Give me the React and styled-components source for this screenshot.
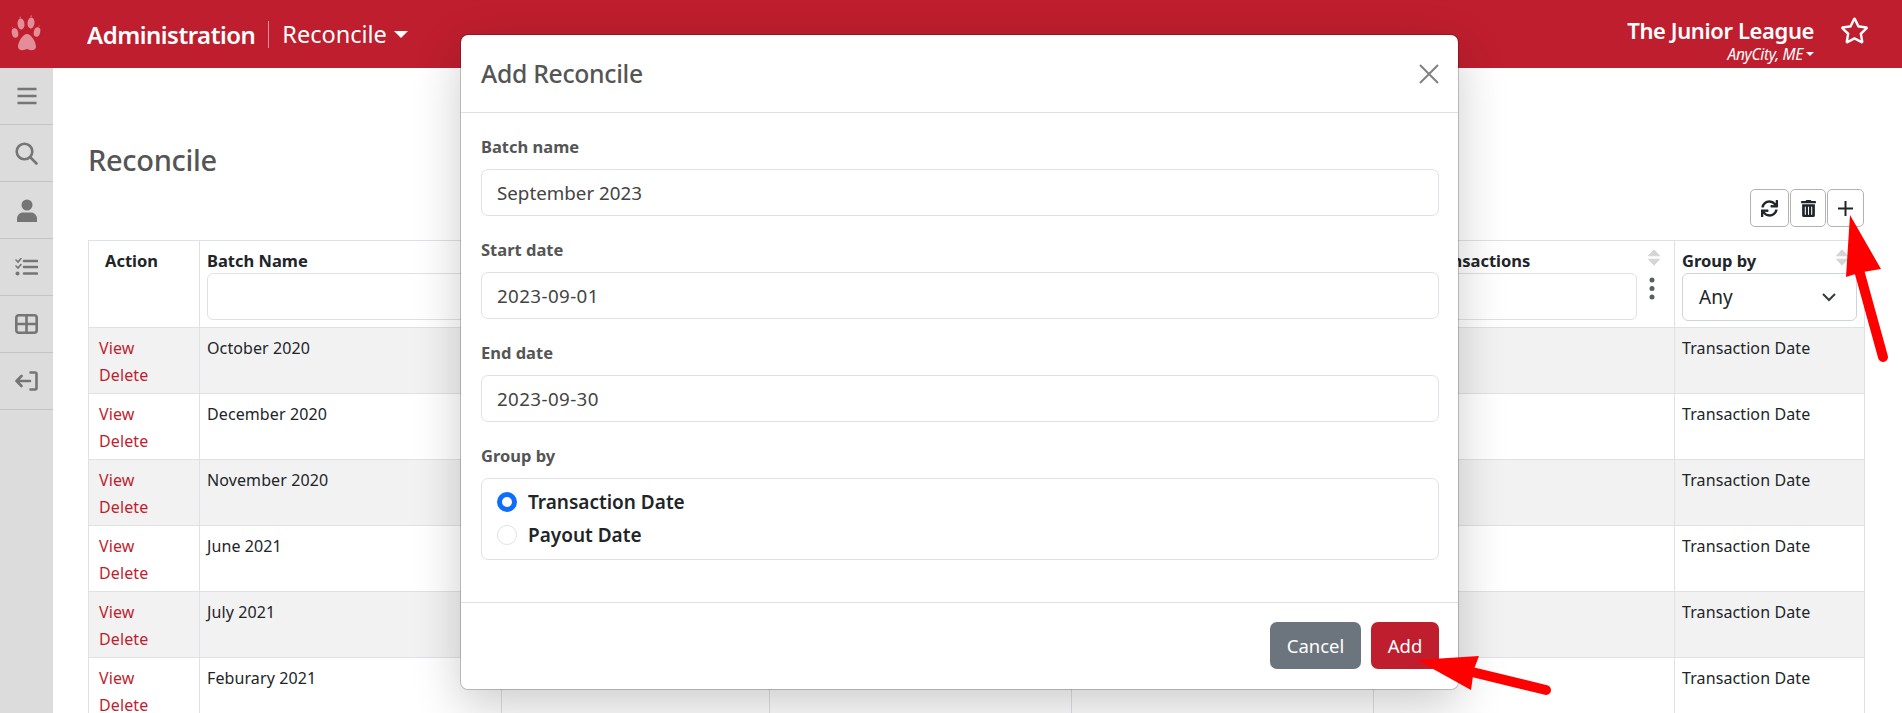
import React from "react";
import styled, { createGlobalStyle } from "styled-components";
import { FaSync, FaRegStar, FaTrashAlt } from "react-icons/fa";

const font = `"Noto Sans", "Open Sans", sans-serif`;

const Global = createGlobalStyle`
  html, body { margin: 0; padding: 0; height: 713px; overflow: hidden; background: #fff; }
  body { font-family: ${font}; font-size: 15px; color: #212529; }
  * { box-sizing: border-box; }
`;

const Page = styled.div`position: relative; width: 1902px; height: 713px; overflow: hidden;`;
const TopBar = styled.header`
  height: 68px; background: #bf1e2e; color: #fff; display: flex; align-items: center;
`;
const LogoBox = styled.div`width: 53px; display: flex; justify-content: center; padding-bottom: 4px;`;
const BrandTitle = styled.div`font-size: 24px; font-weight: 600; margin-left: 34px; letter-spacing: -0.5px;`;
const Divider = styled.div`width: 1px; height: 27px; background: rgba(255,255,255,.5); margin: 0 13px;`;
const Section = styled.div`font-size: 23.5px; display: flex; align-items: center; gap: 7px;`;
const Caret = styled.span`
  width: 0; height: 0; border-left: ${p => p.$s}px solid transparent; border-right: ${p => p.$s}px solid transparent;
  border-top: ${p => p.$s}px solid #fff;
`;
const Org = styled.div`margin-left: auto; padding-top: 11px; display: flex; flex-direction: column; align-items: flex-end; line-height: 1;`;
const OrgName = styled.div`font-size: 22px; font-weight: 600; letter-spacing: -0.4px; line-height: 26px; margin-bottom: 2px;`;
const OrgCity = styled.div`font-size: 15.500px; font-style: italic; display: flex; align-items: center; gap: 3px; line-height: 18px; letter-spacing: -0.3px;`;
const StarWrap = styled.div`width: 88px; display: flex; padding-left: 26px; font-size: 29px; padding-bottom: 8px;`;

const Body = styled.div`display: flex; height: 645px;`;
const Side = styled.nav`width: 53px; background: #dcdcdc; flex: none;`;
const SideItem = styled.div`
  height: 57px; border-bottom: 1px solid #c4c4c4; display: flex; align-items: center; justify-content: center;
  color: #757575;
`;
const Main = styled.main`flex: 1; padding: 0 38px 0 35px; min-width: 0;`;
const H1 = styled.h1`margin: 72px 0 0; font-size: 29px; line-height: 40px; font-weight: 500; color: #555; letter-spacing: -0.3px;`;
const Tools = styled.div`display: flex; justify-content: flex-end; gap: 1px; margin-top: 9px; height: 38px;`;
const ToolBtn = styled.button`
  width: ${p => p.$w}px; height: 38px; padding: 0; background: #fff; border: 1px solid #b3b3b3; border-radius: 5px;
  display: flex; align-items: center; justify-content: center; color: #212529; font-size: 17px;
`;
const Table = styled.table`
  margin-top: 13px; width: 1776px; table-layout: fixed; border-collapse: collapse; font-size: 16px; line-height: 27px;
`;
const Th = styled.th`
  position: relative; height: 87px; vertical-align: top; text-align: left; border: 1px solid #dee2e6; padding: 6px 7px 0; font-weight: 700; font-size: 16.500px;
  white-space: nowrap;
  ${p => p.$lead && "padding-left: 16px;"}
`;
const Td = styled.td`
  height: 66px; vertical-align: top; border: 1px solid #dee2e6; padding: 7px 7px 0; background: ${p => p.$odd ? "#f2f2f2" : "#fff"};
  color: #212529; letter-spacing: 0.1px;
  ${p => p.$lead && "padding-left: 10px;"}
`;
const RowLink = styled.div`color: #bf1e2e; line-height: 27px;`;
const Filter = styled.div`height: 47px; flex: 1; border: 1px solid #dee2e6; border-radius: 6px; background: #fff; margin-top: -1px;`;
const FilterRow = styled.div`display: flex; align-items: flex-start; ${p => p.$spaced && "margin-top: 27px;"}`;
const SortMark = styled.svg`position: absolute; right: ${p => p.$right}px; top: 8px; width: 12px; height: 17px; color: #d5d5d5;`;
const Dots = styled.svg`width: 30px; height: 24px; flex: none; margin-top: 3px; color: #5a5f63;`;
const SelectBox = styled.div`
  height: 48px; border: 1px solid #ced4da; border-radius: 6px; display: flex; align-items: center; justify-content: space-between;
  padding: 0 20px 0 16px; font-weight: 400; font-size: 19px; background: #fff; margin-top: -1px;
`;

const Modal = styled.div`
  position: absolute; left: 460px; top: 34px; width: 999px; height: 656px; background: #fff;
  border: 1px solid rgba(0,0,0,.2); border-radius: 8px; box-shadow: 0 16px 48px rgba(0,0,0,.2); display: flex; flex-direction: column;
  background-clip: padding-box;
`;
const ModalHead = styled.div`height: 78px; border-bottom: 1px solid #dee2e6; display: flex; align-items: center; justify-content: space-between; padding: 0 19px 0 20px;`;
const ModalTitle = styled.div`font-size: 24.750px; color: #555; font-weight: 500; letter-spacing: -0.3px;`;
const Close = styled.svg`width: 20px; height: 20px; color: #808080;`;
const ModalBody = styled.div`flex: 1; padding: 20px 19px 0 20px;`;
const Field = styled.div`margin-bottom: 20px;`;
const Label = styled.div`font-weight: 700; font-size: 16.500px; color: #555; line-height: 27px; margin-bottom: 9px;`;
const Input = styled.div`
  height: 47px; border: 1px solid #dee2e6; border-radius: 7px; padding: 0 15px; display: flex; align-items: center; font-size: 18.750px; color: #444;
  letter-spacing: ${p => p.$date ? "0.4px" : "0"};
`;
const RadioBox = styled.div`border: 1px solid #dee2e6; border-radius: 7px; height: 82px; padding: 6px 15px 5px; display: flex; flex-direction: column; margin-top: 2px;`;
const RadioRow = styled.div`display: flex; align-items: center; gap: 11px; height: 33px; flex: none; font-weight: 600; font-size: 19px;`;
const Radio = styled.span`
  width: 20px; height: 20px; border-radius: 50%; flex: none;
  ${p => p.$on ? "border: 5.5px solid #0d6efd; background:#fff;" : "border: 1px solid #dee2e6; background:#fff;"}
`;
const ModalFoot = styled.div`height: 87px; flex: none; border-top: 1px solid #dee2e6; display: flex; justify-content: flex-end; align-items: flex-start; gap: 10px; padding: 19px 19px 0;`;
const Btn = styled.button`
  height: 47px; width: ${p => p.$w}px; border: none; border-radius: 7px; color: #fff; background: ${p => p.$bg}; font: 400 18.500px ${font};
`;
const ArrowLayer = styled.svg`position: absolute; left: 0; top: 0; width: 1902px; height: 713px; pointer-events: none;`;

const rows = ["October 2020", "December 2020", "November 2020", "June 2021", "July 2021", "Feburary 2021"];

const Paw = () => (
  <svg width="34" height="40" viewBox="10 12 34 40" fill="#e38d98">
    <ellipse cx="15" cy="33" rx="3.200" ry="4.800" transform="rotate(-12 15 33)" />
    <ellipse cx="21" cy="24" rx="3.500" ry="5.500" transform="rotate(-6 21 24)" />
    <ellipse cx="31" cy="23" rx="3.500" ry="5.500" transform="rotate(6 31 23)" />
    <ellipse cx="37" cy="32" rx="3.200" ry="4.800" transform="rotate(14 37 32)" />
    <path d="M27 34c4 0 9 8 9 12.500 0 4-5 4.500-9 2.500-4 2-9 1.500-9-2.500 0-4.500 5-12.500 9-12.500z" />
    <path d="M19.500 18l.6-2 .6 2zM30.500 17l.6-2.500.6 2.500zM12.500 28l-.5-1.500 1.200 1zM38.500 26.500l.8-1.500 0 1.700z" />
  </svg>
);

const SortIcon = ({ right }) => (
  <SortMark $right={right} viewBox="0 0 12 17" fill="currentColor" stroke="currentColor" strokeWidth="1" strokeLinejoin="round">
    <path d="M6 .8l5.500 6H.5zM6 16.200l5.500-6H.5z" />
  </SortMark>
);

const iconStroke = { fill: "none", stroke: "currentColor", strokeWidth: 2.6 };

const MenuIcon = () => (
  <svg width="20" height="18" viewBox="0 0 20 18" {...iconStroke}><path d="M.5 2h19M.5 9h19M.5 16h19" /></svg>
);
const SearchIcon = () => (
  <svg width="23" height="23" viewBox="0 0 23 23" {...iconStroke} strokeLinecap="round"><circle cx="9.500" cy="9.500" r="7.800" /><path d="M15.500 15.500l6 6" /></svg>
);
const PersonIcon = () => (
  <svg width="20" height="23" viewBox="0 0 20 23" fill="currentColor"><circle cx="10" cy="6" r="5.500" /><path d="M0 23v-3c0-4 3-6.500 6-6.500h8c3 0 6 2.500 6 6.500v3z" /></svg>
);
const ChecksIcon = () => (
  <svg width="23" height="18" viewBox="0 0 23 18" fill="none" stroke="currentColor" strokeLinecap="round">
    <path d="M9 3h13M9 9h13M9 15.500h13" strokeWidth="2.600" />
    <path d="M1 2l2 2 3-3.500M1 8l2 2 3-3.500" strokeWidth="1.600" />
    <circle cx="2.500" cy="15.500" r="2" fill="currentColor" stroke="none" />
  </svg>
);
const TableIcon = () => (
  <svg width="23" height="20" viewBox="0 0 23 20" {...iconStroke}>
    <rect x="1.300" y="1.300" width="20.400" height="17.400" rx="2.500" /><path d="M11.500 1v18M1 10h21" />
  </svg>
);
const ExitIcon = () => (
  <svg width="23" height="20" viewBox="0 0 23 20" {...iconStroke} strokeLinecap="round" strokeLinejoin="round">
    <path d="M15.500 1.500h4.500a1.500 1.500 0 0 1 1.500 1.500v14a1.500 1.500 0 0 1-1.500 1.500h-4.500M15 10H1.500M6.500 5l-5 5 5 5" />
  </svg>
);
const PlusIcon = () => (
  <svg width="15" height="15" viewBox="0 0 15 15" fill="none" stroke="currentColor" strokeWidth="2"><path d="M7.500 0v15M0 7.500h15" /></svg>
);

export default function App() {
  return (
    <Page>
      <Global />
      <TopBar>
        <LogoBox><Paw /></LogoBox>
        <BrandTitle>Administration</BrandTitle>
        <Divider />
        <Section>Reconcile <Caret $s={7} /></Section>
        <Org>
          <OrgName>The Junior League</OrgName>
          <OrgCity>AnyCity, ME <Caret $s={4} /></OrgCity>
        </Org>
        <StarWrap><FaRegStar /></StarWrap>
      </TopBar>
      <Body>
        <Side>
          <SideItem><MenuIcon /></SideItem>
          <SideItem><SearchIcon /></SideItem>
          <SideItem><PersonIcon /></SideItem>
          <SideItem><ChecksIcon /></SideItem>
          <SideItem><TableIcon /></SideItem>
          <SideItem><ExitIcon /></SideItem>
        </Side>
        <Main>
          <H1>Reconcile</H1>
          <Tools>
            <ToolBtn $w={39}><FaSync /></ToolBtn>
            <ToolBtn $w={36}><FaTrashAlt /></ToolBtn>
            <ToolBtn $w={37}><PlusIcon /></ToolBtn>
          </Tools>
          <Table>
            <colgroup>
              {[111,302,268,302,302,301,190].map((w, i) => <col key={i} style={{ width: w }} />)}
            </colgroup>
            <thead>
              <tr>
                <Th $lead>Action</Th>
                <Th>Batch Name<FilterRow><Filter /></FilterRow></Th>
                <Th><FilterRow $spaced><Filter /></FilterRow></Th>
                <Th><FilterRow $spaced><Filter /></FilterRow></Th>
                <Th><FilterRow $spaced><Filter /></FilterRow></Th>
                <Th>Total Transactions<SortIcon right={14} />
                  <FilterRow>
                    <Filter />
                    <Dots viewBox="0 0 30 24" fill="currentColor"><circle cx="15" cy="3" r="2.500" /><circle cx="15" cy="11.500" r="2.500" /><circle cx="15" cy="20" r="2.500" /></Dots>
                  </FilterRow>
                </Th>
                <Th>Group by<SortIcon right={16} />
                  <SelectBox>Any
                    <svg width="14" height="9" viewBox="0 0 14 9" fill="none" stroke="#343a40" strokeWidth="2"><path d="M1 1l6 6 6-6" /></svg>
                  </SelectBox>
                </Th>
              </tr>
            </thead>
            <tbody>
              {rows.map((r, i) => (
                <tr key={r}>
                  <Td $lead $odd={i % 2 === 0}><RowLink>View</RowLink><RowLink>Delete</RowLink></Td>
                  <Td $odd={i % 2 === 0}>{r}</Td>
                  <Td $odd={i % 2 === 0} /><Td $odd={i % 2 === 0} /><Td $odd={i % 2 === 0} /><Td $odd={i % 2 === 0} />
                  <Td $odd={i % 2 === 0}>Transaction Date</Td>
                </tr>
              ))}
            </tbody>
          </Table>
        </Main>
      </Body>
      <Modal>
        <ModalHead>
          <ModalTitle>Add Reconcile</ModalTitle>
          <Close viewBox="0 0 20 20" fill="none" stroke="currentColor" strokeWidth="2"><path d="M1 1l18 18M19 1L1 19" /></Close>
        </ModalHead>
        <ModalBody>
          <Field><Label>Batch name</Label><Input>September 2023</Input></Field>
          <Field><Label>Start date</Label><Input $date>2023-09-01</Input></Field>
          <Field><Label>End date</Label><Input $date>2023-09-30</Input></Field>
          <Field>
            <Label>Group by</Label>
            <RadioBox>
              <RadioRow><Radio $on />Transaction Date</RadioRow>
              <RadioRow><Radio />Payout Date</RadioRow>
            </RadioBox>
          </Field>
        </ModalBody>
        <ModalFoot>
          <Btn $w={91} $bg="#6c757d">Cancel</Btn>
          <Btn $w={68} $bg="#bf1e2e">Add</Btn>
        </ModalFoot>
      </Modal>
      <ArrowLayer viewBox="0 0 1902 713">
        <path d="M1850 215L1881 269L1860 272.500L1846 277z" fill="#f00" />
        <path d="M1859 270L1883 357" fill="none" stroke="#f00" strokeWidth="10" strokeLinecap="round" />
        <path d="M1417 660L1479 656L1474 669L1471 690z" fill="#f00" />
        <path d="M1472 672L1546 690" fill="none" stroke="#f00" strokeWidth="10" strokeLinecap="round" />
      </ArrowLayer>
    </Page>
  );
}
